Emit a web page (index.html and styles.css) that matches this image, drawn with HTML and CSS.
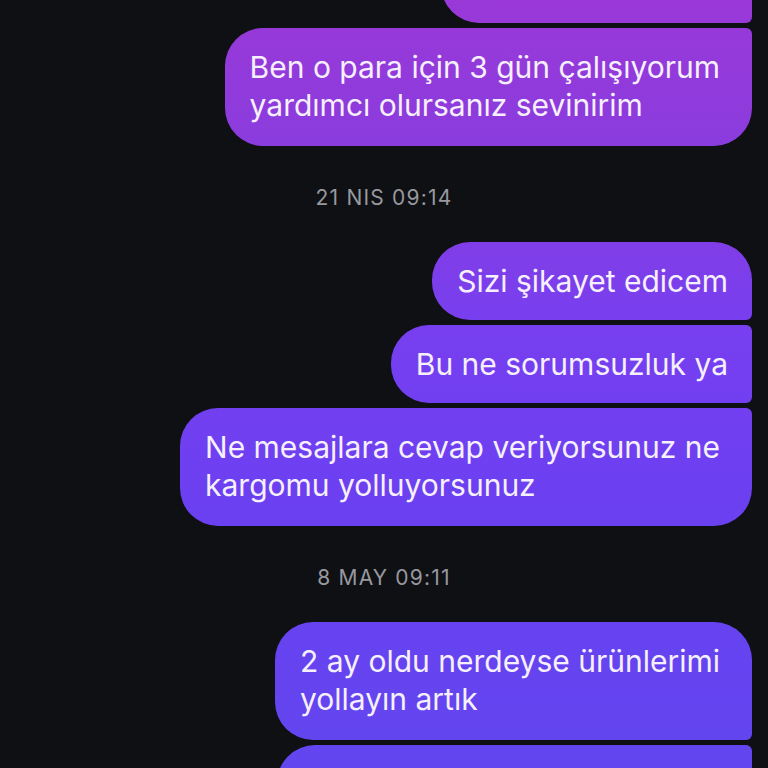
FILE: index.html
```html
<!DOCTYPE html>
<html lang="tr">
<head>
    <meta charset="UTF-8">
    <meta name="viewport" content="width=device-width, initial-scale=1.0">
    <title>Mesajlar</title>
    <link rel="stylesheet" href="styles.css">
</head>
<body>
    <div class="chat">
        <div class="group">
            <div class="bubble bubble-cut">&nbsp;</div>
            <div class="bubble multi last">Ben o para için 3 gün çalışıyorum<br>yardımcı olursanız sevinirim</div>
        </div>

        <div class="stamp">21 NIS 09:14</div>

        <div class="group">
            <div class="bubble first">Sizi şikayet edicem</div>
            <div class="bubble">Bu ne sorumsuzluk ya</div>
            <div class="bubble multi last">Ne mesajlara cevap veriyorsunuz ne<br>kargomu yolluyorsunuz</div>
        </div>

        <div class="stamp">8 MAY 09:11</div>

        <div class="group">
            <div class="bubble multi first">2 ay oldu nerdeyse ürünlerimi<br>yollayın artık</div>
            <div class="bubble bubble-wide">&nbsp;</div>
        </div>
    </div>
</body>
</html>
```

FILE: styles.css
```css
* {
    box-sizing: border-box;
    margin: 0;
    padding: 0;
}
html, body {
    height: 100%;
    overflow: hidden;
}
body {
    background-color: #0e1014;
    font-family: 'Inter', 'Roboto', 'Liberation Sans', sans-serif;
}
.chat {
    display: flex;
    flex-direction: column;
    padding: 0 16px 0 16px;
    margin-top: -55px;
}
.group {
    display: flex;
    flex-direction: column;
    align-items: flex-end;
    gap: 5px;
}
.bubble {
    white-space: nowrap;
    padding: 20px 24px 20px 25px;
    font-size: 30px;
    line-height: 38px;
    color: #f6f0fd;
    border-radius: 38px 6px 6px 38px;
    background: linear-gradient(180deg, #9a38d8 0px, #8a3cde 150px, #773ff0 330px, #6a40f1 520px, #6246ef 768px);
    background-attachment: fixed;
}
.bubble.multi {
    padding: 20px 32px 22px 25px;
}
.bubble.first {
    border-top-right-radius: 38px;
}
.bubble.last {
    border-bottom-right-radius: 38px;
}
.bubble-cut {
    width: 311px;
}
.bubble-wide {
    width: 475px;
}
.stamp {
    text-align: center;
    color: #98989e;
    font-size: 21px;
    letter-spacing: 1.2px;
    line-height: 24px;
    padding: 40px 0 32px;
}
```
